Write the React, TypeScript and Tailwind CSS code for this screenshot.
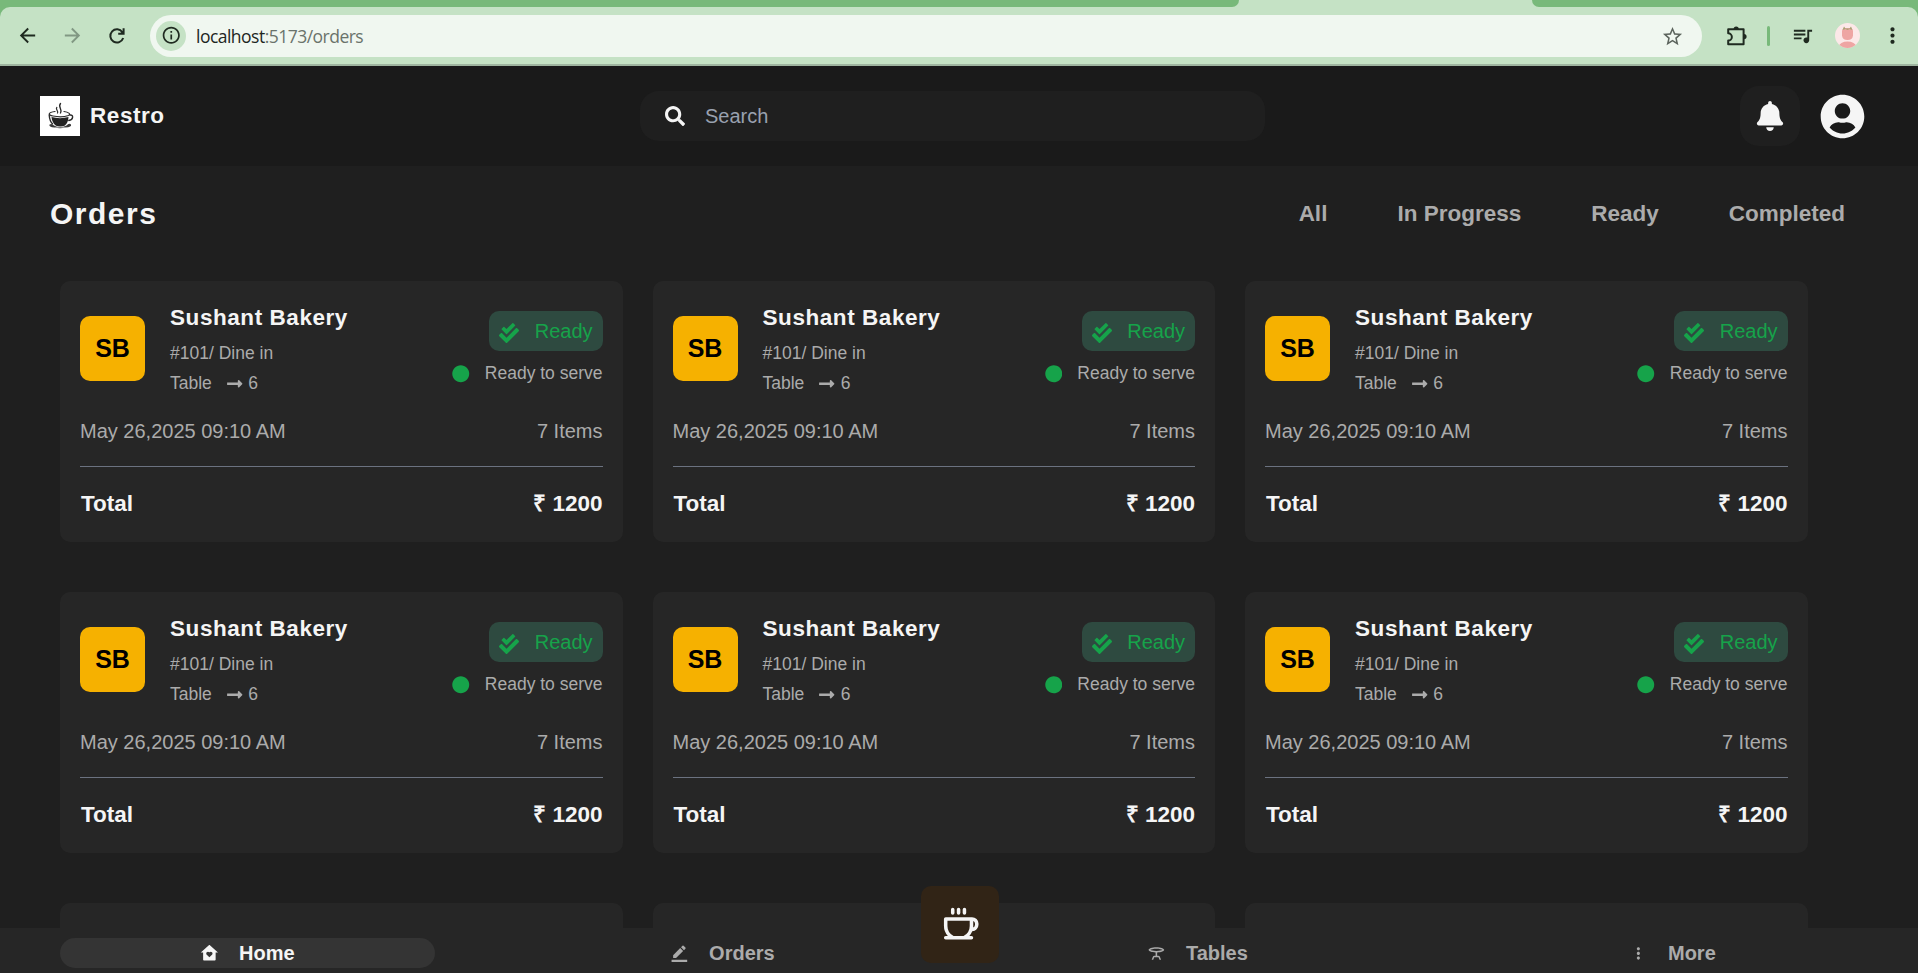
import React from "react";
import {
  MdArrowBack,
  MdArrowForward,
  MdInfoOutline,
  MdStarBorder,
  MdQueueMusic,
  MdBorderColor,
  MdOutlineTableBar,
  MdMoreVert,
} from "react-icons/md";
import {
  FaBell,
  FaUserCircle,
  FaSearch,
  FaCheckDouble,
  FaCircle,
  FaLongArrowAltRight,
} from "react-icons/fa";
import { RiHomeHeartFill } from "react-icons/ri";
import { PiCoffeeBold } from "react-icons/pi";

function ReloadIcon() {
  return (
    <svg width="18" height="18" viewBox="0 0 18 18" fill="none" stroke="#1f2a20" strokeWidth="2">
      <path d="M15.200 11A6.600 6.600 0 1 1 14.400 5.200" />
      <path d="M15.600 1.200V6.700H10.200" />
      <path d="M12 6.500L15.600 3V6.500Z" fill="#1f2a20" stroke="none" />
    </svg>
  );
}

function PuzzleIcon() {
  return (
    <svg width="22" height="22" viewBox="0 0 22 22" fill="none">
      <path
        d="M2.200 4.300H17.600V19.300H2.200V15.600A3.600 3.600 0 0 0 2.200 8.300Z"
        stroke="#1f2a20"
        strokeWidth="2"
        strokeLinejoin="round"
      />
      <path d="M7.600 4A2.600 2.600 0 0 1 12.800 4ZM18 9A2.600 2.600 0 0 1 18 14.200Z" fill="#1f2a20" />
    </svg>
  );
}

function ProfilePicture() {
  return (
    <svg width="25" height="25" viewBox="0 0 25 25">
      <defs>
        <clipPath id="face">
          <circle cx="12.5" cy="12.5" r="12.5" />
        </clipPath>
      </defs>
      <g clipPath="url(#face)">
        <rect width="25" height="25" fill="#fce8e8" />
        <path d="M7 8Q7 5 12.500 5T18 8V12.500Q17.500 17 12.500 17T7 12.500Z" fill="#eea5a3" />
        <path d="M7.500 7L9 3.500L10.500 5.500H14.500L16 3.500L17.500 7L14.500 6L12.500 7L10.500 6Z" fill="#a9a173" />
        <ellipse cx="12.500" cy="23.500" rx="8.500" ry="5" fill="#eea5a3" />
      </g>
    </svg>
  );
}

function Logo() {
  return (
    <svg width="40" height="40" viewBox="0 0 40 40" className="bg-white">
      <g fill="none" stroke="#2b2b2b" strokeLinecap="round">
        <path d="M20.500 7.500C17.500 11 22.800 13 20.500 17" strokeWidth="1.400" />
        <path d="M16.800 11.500C15 13.500 19 15 17.500 17" strokeWidth="1.200" />
        <path d="M15 15.500C8 16.300 7.500 19 13 20C18 21 25 20.700 28.500 19.500C31.500 18 28 16 24 15.500" strokeWidth="1.200" />
        <path d="M9.200 19C9.500 23 10.500 26 12.500 27.800M30 19C33.800 18.500 33.500 24 28.800 24.500" strokeWidth="1.400" />
      </g>
      <path d="M11.500 21Q20 23.300 28.500 21C28.300 25 27 28 24.500 29.800Q20 31.200 16 29.800C13 27.500 11.800 24.500 11.500 21Z" fill="#222" />
      <path d="M9.500 28.500Q12 27 14 29.500Q20 32.500 26.500 29.500Q29 26.800 31 28.500Q32 31 25.500 31.600Q20 33 14.500 31.600Q8.500 31 9.500 28.500Z" fill="#3a3a3a" />
      <path d="M15 31.300Q20 32.300 25.500 31.300" stroke="#ccc" strokeWidth="0.600" fill="none" />
    </svg>
  );
}

function BrowserBar() {
  return (
    <div className="h-[66px] bg-[#78b97a]">
      <div className="flex h-[7px] bg-[#c5e2c5]">
        <div className="h-[7px] w-[1239px] rounded-br-[11px] bg-[#78b97a]" />
        <div className="w-[293px]" />
        <div className="h-[7px] flex-1 rounded-bl-[11px] bg-[#78b97a]" />
      </div>
      <div className="flex h-[59px] items-center rounded-t-[10px] border-b-2 border-[#9fb5a0] bg-[#c5e2c5] text-[#1f2a20]">
        <div className="flex w-[150px] items-center gap-[22px] pl-[16px]">
          <MdArrowBack size={23} />
          <MdArrowForward size={23} className="text-[#819883]" />
          <div className="pl-[2px]">
            <ReloadIcon />
          </div>
        </div>
        <div className="flex h-[42px] w-[1552px] items-center rounded-full bg-[#f0f7f0] pr-[18px] pl-[6px]">
          <div className="flex size-[30px] items-center justify-center rounded-full bg-[#c5e2c5]">
            <MdInfoOutline size={20.5} />
          </div>
          <div className="ml-[10px] flex-1 font-['Open_Sans',sans-serif] text-[17.5px] leading-[24px] tracking-[-0.52px] text-[#6a736b]">
            <span className="text-[#1d261e]">localhost</span>:5173/orders
          </div>
          <MdStarBorder size={23} className="mt-px text-[#5c645d]" />
        </div>
        <div className="flex flex-1 items-center">
          <div className="ml-[24px]">
            <PuzzleIcon />
          </div>
          <div className="ml-[19px] h-[20px] w-[3px] rounded-full bg-[#78b97a]" />
          <MdQueueMusic size={23} className="-mt-px ml-[21px]" />
          <div className="ml-[21px]">
            <ProfilePicture />
          </div>
          <MdMoreVert size={25} className="ml-[20px]" />
        </div>
      </div>
    </div>
  );
}

function Header() {
  return (
    <header className="flex h-[100px] items-center bg-[#1a1a1a] pl-[40px] text-[#f5f5f5]">
      <div className="flex w-[600px] items-center gap-[10px]">
        <Logo />
        <h1 className="text-[22.5px] font-bold tracking-wide">Restro</h1>
      </div>
      <div className="flex h-[50px] w-[625px] items-center gap-[20px] rounded-[18.75px] bg-[#1f1f1f] pl-[25px]">
        <FaSearch size={20} />
        <span className="text-[20px] text-[#99a1af]">Search</span>
      </div>
      <div className="ml-[475px] flex size-[60px] items-center justify-center rounded-[18.75px] bg-[#1f1f1f]">
        <FaBell size={30} />
      </div>
      <FaUserCircle size={45} className="ml-[20px]" />
    </header>
  );
}

function OrderCard() {
  return (
    <article className="flex h-[261px] flex-col rounded-[10px] bg-[#262626] px-[20px] pt-[17px]">
      <div className="flex h-[100px]">
        <div className="mt-[18px] flex size-[65px] items-center justify-center rounded-[10px] bg-[#f6b100] text-[25px] font-bold text-black">
          SB
        </div>
        <div className="ml-[25px] text-[17.5px] leading-[30px] text-[#ababab]">
          <h2 className="text-[22.5px] leading-[40px] font-bold tracking-wide text-[#f5f5f5]">Sushant Bakery</h2>
          <p>#101/ Dine in</p>
          <p className="flex items-center">
            Table
            <FaLongArrowAltRight className="mt-[2px] mr-[5px] ml-[14px]" />6
          </p>
        </div>
        <div className="ml-auto flex flex-col items-end pt-[13px]">
          <div className="flex h-[40px] items-center gap-[15.5px] rounded-[10px] bg-[#2e4a40] px-[10px] text-[20px] text-[#16a34a]">
            <FaCheckDouble size={20} className="mt-[4px]" />
            Ready
          </div>
          <p className="mt-[7px] flex items-center gap-[15px] text-[17.5px] leading-[30px] text-[#ababab]">
            <FaCircle className="mt-[2px] text-[#16a34a]" />
            Ready to serve
          </p>
        </div>
      </div>
      <div className="mt-[18px] flex justify-between text-[20px] leading-[30px] text-[#ababab]">
        <p>May 26,2025 09:10 AM</p>
        <p>7 Items</p>
      </div>
      <hr className="mt-[20px] border-[#6b7280]" />
      <div className="mt-[22px] flex justify-between text-[22.5px] leading-[30px] font-bold text-[#f5f5f5]">
        <p className="pl-px">Total</p>
        <p>₹ 1200</p>
      </div>
    </article>
  );
}

const tabs = ["All", "In Progress", "Ready", "Completed"];

const navItems = [
  { label: "Home", Icon: RiHomeHeartFill, active: true },
  { label: "Orders", Icon: MdBorderColor, active: false },
  { label: "Tables", Icon: MdOutlineTableBar, active: false },
  { label: "More", Icon: MdMoreVert, active: false },
];

function BottomNav() {
  return (
    <nav className="absolute inset-x-0 bottom-0 flex h-[45px] gap-[100px] bg-[#262626] pt-[10px] pl-[60px]">
      {navItems.map(({ label, Icon, active }) => (
        <div
          key={label}
          className={
            active
              ? "flex h-[30px] w-[375px] items-center justify-center gap-[20px] rounded-[18.75px] bg-[#343434] text-[20px] leading-[30px] font-bold text-[#f5f5f5]"
              : "flex h-[30px] w-[375px] items-center justify-center gap-[20px] text-[20px] leading-[30px] font-bold text-[#ababab]"
          }
        >
          <Icon size={18.75} />
          {label}
        </div>
      ))}
      <div className="absolute bottom-[10px] left-[921px] flex h-[77px] w-[78px] items-center justify-center rounded-[10px] bg-[#312416] text-[#f5f5f5]">
        <PiCoffeeBold size={37.5} />
      </div>
    </nav>
  );
}

export default function App() {
  return (
    <div className="relative h-[973px] w-[1918px] overflow-hidden bg-[#1f1f1f] font-['Liberation_Sans',Arial,sans-serif]">
      <BrowserBar />
      <Header />
      <div className="flex h-[95px] items-center justify-between pr-[73px] pl-[50px]">
        <h1 className="text-[30px] leading-[40px] font-bold tracking-wider text-[#f5f5f5]">Orders</h1>
        <div className="flex gap-[70px] text-[22.5px] leading-[30px] font-bold text-[#ababab]">
          {tabs.map((tab) => (
            <span key={tab}>{tab}</span>
          ))}
        </div>
      </div>
      <main className="grid grid-cols-[562.5px_562.5px_562.5px] gap-x-[30px] gap-y-[50px] px-[60px] pt-[20px]">
        {Array.from({ length: 6 }, (_, i) => (
          <OrderCard key={i} />
        ))}
        {Array.from({ length: 3 }, (_, i) => (
          <div key={i} className="h-[70px] rounded-t-[10px] bg-[#262626]" />
        ))}
      </main>
      <BottomNav />
    </div>
  );
}
